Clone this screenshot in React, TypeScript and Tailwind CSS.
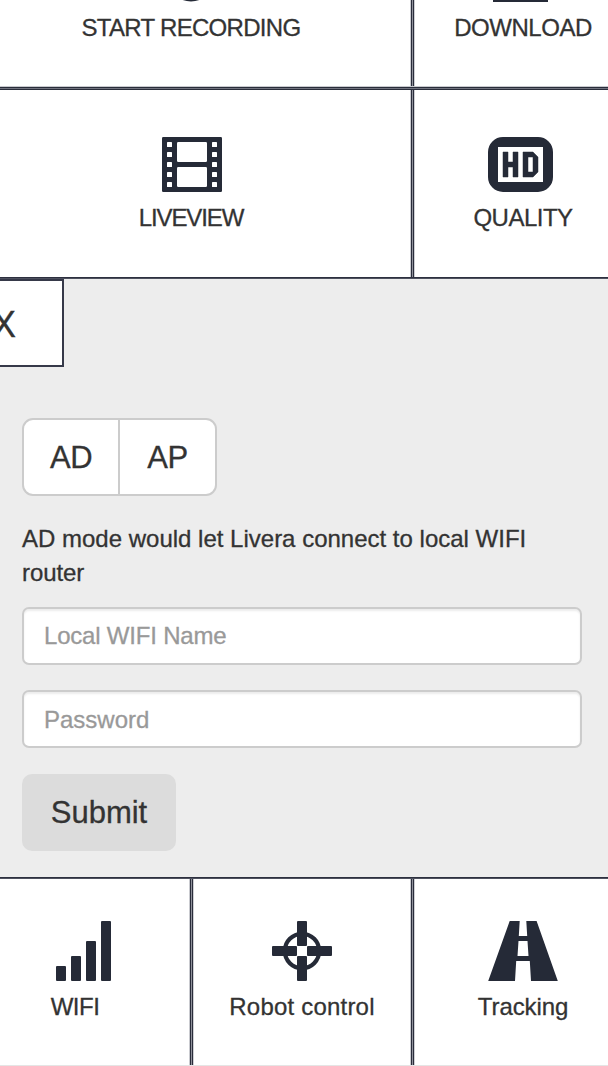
import type { ReactNode } from "react";

function VLine() {
  return (
    <div className="flex w-[5px] shrink-0 self-stretch">
      <i className="w-px bg-[#c9cacf]" />
      <i className="w-px bg-[#2a2d3b]" />
      <i className="w-px bg-[#8f919b]" />
      <i className="w-px bg-[#2a2d3b]" />
      <i className="w-px bg-[#cfd0d4]" />
    </div>
  );
}

function Tile({ className, icon, label, tracking }: { className: string; icon: ReactNode; label: string; tracking: string }) {
  return (
    <button className={`flex shrink-0 flex-col items-center bg-white ${className}`}>
      {icon}
      <span className={`mt-[9px] whitespace-nowrap text-[24px] leading-[34px] ${tracking}`}>{label}</span>
    </button>
  );
}

const ink = "shrink-0 text-[#252a37]";

function FilmIcon() {
  const holes = [5, 15, 25, 35, 45];
  return (
    <svg className={`${ink} ml-px`} width="60" height="55" viewBox="0 0 60 55" fill="currentColor">
      <rect width="60" height="55" rx="1.2" />
      <g fill="#fff">
        {holes.map((y) => (
          <g key={y}>
            <rect x="5" y={y} width="5" height="5" rx=".6" />
            <rect x="50" y={y} width="5" height="5" rx=".6" />
          </g>
        ))}
        <rect x="15" y="5" width="30" height="20" rx="1.2" />
        <rect x="15" y="30" width="30" height="20" rx="1.2" />
      </g>
    </svg>
  );
}

function HdIcon() {
  return (
    <svg className={`${ink} -ml-[5px]`} width="65" height="55" viewBox="0 0 65 55" fill="currentColor">
      <path
        fillRule="evenodd"
        d="M15 0H50A15 15 0 0 1 65 15V40A15 15 0 0 1 50 55H15A15 15 0 0 1 0 40V15A15 15 0 0 1 15 0ZM10 10V45H55V10Z"
      />
      <g stroke="currentColor" strokeWidth=".5">
        <path d="M15 15H20V25H25V15H30V40H25V30H20V40H15Z" />
        <path fillRule="evenodd" d="M35 15H45L50 20V35L45 40H35ZM40 20V35H45V20Z" />
      </g>
    </svg>
  );
}

function SignalIcon() {
  return (
    <svg className={`${ink} ml-[17px]`} width="55" height="60" viewBox="0 0 55 60" fill="currentColor">
      <rect y="45" width="10" height="15" rx="1" />
      <rect x="15" y="35" width="10" height="25" rx="1" />
      <rect x="30" y="20" width="10" height="40" rx="1" />
      <rect x="45" width="10" height="60" rx="1" />
    </svg>
  );
}

function CrosshairIcon() {
  return (
    <svg className={ink} width="60" height="60" viewBox="0 0 60 60" fill="currentColor">
      <circle cx="30" cy="30" r="17.2" fill="none" stroke="currentColor" strokeWidth="4.2" />
      <rect x="25" width="10" height="25" rx="1" />
      <rect x="25" y="35" width="10" height="25" rx="1" />
      <rect y="25" width="25" height="10" rx="1" />
      <rect x="35" y="25" width="25" height="10" rx="1" />
    </svg>
  );
}

function RoadIcon() {
  return (
    <svg className={ink} width="70" height="60" viewBox="0 0 70 60" fill="currentColor">
      <path
        fillRule="evenodd"
        d="M21.7 0H31.7L30.8 15H39.2L38.3 0H48.6L69.8 60H43L41.8 40H28.2L27 60H.2ZM30.5 20L29.5 35H40.5L39.5 20Z"
      />
    </svg>
  );
}

export default function App() {
  return (
    <main className="flex h-[1066px] w-[608px] flex-col overflow-hidden bg-white text-[#333] [-webkit-text-stroke:0.3px] [font-family:'Liberation_Sans',Arial,sans-serif]">
      <section className="flex h-[86px] shrink-0">
        <Tile
          className="w-[410px] pr-7"
          label="START RECORDING"
          tracking="tracking-[-0.7px]"
          icon={
            <svg className={ink} width="60" height="2" viewBox="0 0 60 2" fill="currentColor">
              <circle cx="30" cy="-24" r="25.4" />
            </svg>
          }
        />
        <VLine />
        <Tile
          className="w-[216px]"
          label="DOWNLOAD"
          tracking="tracking-[-0.45px]"
          icon={
            <svg className={`${ink} -ml-[5px]`} width="55" height="2" viewBox="0 0 55 2" fill="currentColor">
              <rect width="55" height="2" />
            </svg>
          }
        />
      </section>
      <div className="flex h-1 shrink-0 flex-col">
        <i className="h-px bg-[#c9cacf]" />
        <i className="h-px bg-[#2a2d3b]" />
        <i className="h-px bg-[#70727e]" />
        <i className="h-px bg-[#2a2d3b]" />
      </div>
      <section className="flex h-[187px] shrink-0">
        <Tile className="w-[410px] pr-7 pt-[47px]" label="LIVEVIEW" tracking="tracking-[-1.1px]" icon={<FilmIcon />} />
        <VLine />
        <Tile className="w-[216px] pt-[47px]" label="QUALITY" tracking="tracking-[-0.5px]" icon={<HdIcon />} />
      </section>
      <div className="h-px shrink-0 bg-[#2d303f]" />
      <div className="h-px shrink-0 bg-[#4d505e]" />

      <section className="flex h-[598px] shrink-0 flex-col bg-[#ededed]">
        <button className="flex h-[88px] w-[64px] shrink-0 items-center border-y-2 border-r-2 border-[#363949] bg-white">
          <span className="-ml-[8px] pt-[4px] text-[36px] leading-[40px]">X</span>
        </button>
        <div className="ml-[22px] mt-[51px] flex h-[78px] w-[195px] shrink-0 rounded-[11px] border-2 border-[#ccc] bg-white text-[31px] leading-[76px]">
          <button className="w-[96px] border-r-2 border-[#ccc] tracking-[-0.6px]">AD</button>
          <button className="w-[95px] tracking-[-0.4px]">AP</button>
        </div>
        <p className="ml-[22px] mt-[26px] text-[24px] leading-[34px]">
          <span className="block whitespace-nowrap">AD mode would let Livera connect to local WIFI</span>
          <span className="block tracking-[-0.1px]">router</span>
        </p>
        <input
          placeholder="Local WIFI Name"
          className="ml-[22px] mt-[17px] h-[58px] w-[560px] shrink-0 rounded-[7px] border-2 border-[#ccc] bg-white px-[20px] text-[24px] tracking-[-0.2px] shadow-[inset_0_2px_2px_rgba(0,0,0,0.075)] placeholder:text-[#999]"
        />
        <input
          placeholder="Password"
          className="ml-[22px] mt-[25px] h-[58px] w-[560px] shrink-0 rounded-[7px] border-2 border-[#ccc] bg-white px-[20px] pt-[2px] text-[24px] shadow-[inset_0_2px_2px_rgba(0,0,0,0.075)] placeholder:text-[#999]"
        />
        <button className="ml-[22px] mt-[26px] h-[77px] w-[154px] shrink-0 rounded-[10px] bg-[#dcdcdc] text-[31px] leading-[77px]">
          Submit
        </button>
      </section>

      <div className="h-px shrink-0 bg-[#2d303f]" />
      <div className="h-px shrink-0 bg-[#4d505e]" />
      <section className="flex h-[186px] shrink-0">
        <Tile className="w-[189px] pr-[39px] pt-[42px]" label="WIFI" tracking="tracking-[-0.5px]" icon={<SignalIcon />} />
        <VLine />
        <Tile className="w-[216px] pt-[42px]" label="Robot control" tracking="tracking-[0.2px]" icon={<CrosshairIcon />} />
        <VLine />
        <Tile className="w-[216px] pt-[42px]" label="Tracking" tracking="tracking-[-0.1px]" icon={<RoadIcon />} />
      </section>
      <div className="h-px shrink-0 bg-[#e5e5e5]" />
    </main>
  );
}
